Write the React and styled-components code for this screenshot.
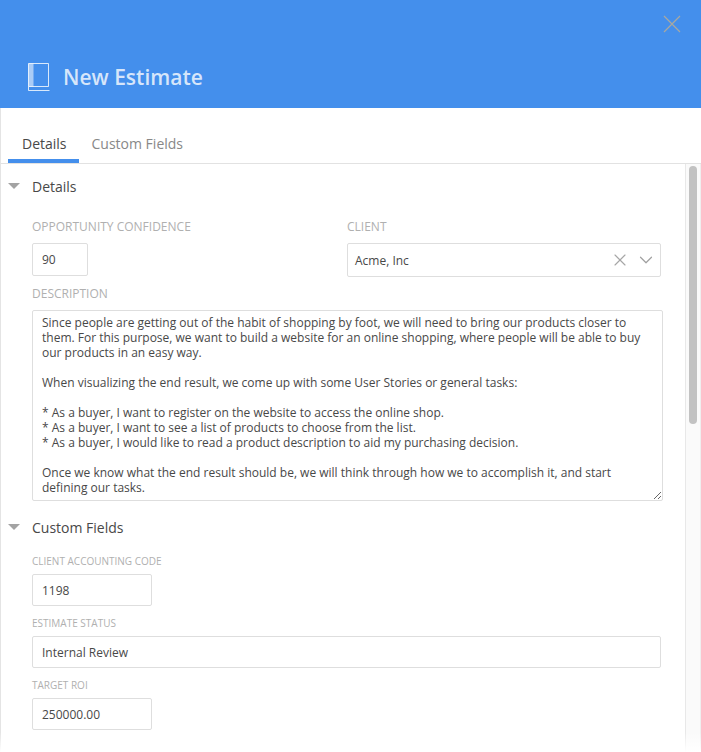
import React from "react";
import styled, { createGlobalStyle } from "styled-components";
import { X, ChevronDown } from "lucide-react";

const GlobalStyle = createGlobalStyle`
  html, body {
    margin: 0;
    padding: 0;
    background: #fff;
    font-family: "Open Sans", "Liberation Sans", sans-serif;
  }
  * { box-sizing: border-box; }
`;

const Modal = styled.div`
  position: relative;
  width: 701px;
  height: 752px;
  overflow: hidden;
  background: #fff;
  display: flex;
  flex-direction: column;
`;

const Header = styled.header`
  height: 108px;
  flex: none;
  background: #448fec;
  padding: 63px 0 0 28px;
  display: flex;
  align-items: flex-start;
  gap: 14px;
`;

const Title = styled.h1`
  margin: 0;
  margin-left: -1px;
  font-size: 21px;
  line-height: 28px;
  font-weight: 600;
  color: rgba(255, 255, 255, 0.78);
`;

const CloseButton = styled.button`
  position: absolute;
  top: 15px;
  right: 20px;
  width: 18px;
  height: 18px;
  padding: 0;
  border: 0;
  background: none;
  display: block;
`;

const Main = styled.div`
  flex: 1;
  min-height: 0;
  display: flex;
  flex-direction: column;
  border-left: 1px solid #e4e4e4;
`;

const Tabs = styled.nav`
  height: 56px;
  flex: none;
  padding: 0 0 0 7px;
  border-bottom: 1px solid #e2e2e2;
  display: flex;
  align-items: flex-end;
  gap: 13px;
`;

const Tab = styled.div`
  height: 51px;
  padding: 22px ${(p) => (p.$active ? "12px 0 14px" : "0 0")};
  font-size: 14px;
  line-height: 19px;
  color: ${(p) => (p.$active ? "#484848" : "#888")};
  border-bottom: 4px solid ${(p) => (p.$active ? "#448fec" : "transparent")};
`;

const Body = styled.div`
  flex: 1;
  min-height: 0;
  display: flex;
  overflow: hidden;
`;

const Content = styled.div`
  flex: 1;
  min-width: 0;
  padding: 0 24px 0 7px;
`;

const Track = styled.div`
  width: 16px;
  flex: none;
  background: #fafafa;
  border-left: 1px solid #e8e8e8;
  border-right: 1px solid #efefef;
  padding: 2px 3px 0;
`;

const Thumb = styled.div`
  width: 8px;
  height: 258px;
  border-radius: 4px;
  background: #c2c2c2;
`;

const BottomFade = styled.div`
  position: absolute;
  left: 0;
  right: 0;
  bottom: 0;
  height: 20px;
  background: linear-gradient(rgba(255, 255, 255, 0), #fff);
  pointer-events: none;
`;

const SectionHead = styled.div`
  display: flex;
  align-items: center;
  height: 20px;
  margin-top: ${(p) => p.$top}px;
  font-size: 14px;
  color: #484848;
  gap: 12px;
`;

const Caret = styled.span`
  width: 0;
  height: 0;
  margin-top: -1px;
  border-left: 6px solid transparent;
  border-right: 6px solid transparent;
  border-top: 6px solid #a3a3a3;
`;

const Section = styled.section`
  padding-left: 24px;
`;

const TopRow = styled.div`
  display: grid;
  grid-template-columns: 315px 314px;
  margin-top: 23px;
`;

const Label = styled.label`
  display: block;
  font-size: ${(p) => (p.$small ? "10px" : "12px")};
  line-height: 16px;
  color: #b0b0b0;
  margin-top: ${(p) => p.$top || 0}px;
`;

const Field = styled.div`
  width: ${(p) => p.$width}px;
  height: ${(p) => p.$height || 32}px;
  margin-top: ${(p) => p.$top}px;
  padding-left: ${(p) => p.$pad || 9}px;
  border: 1px solid #dedede;
  border-radius: 2px;
  background: #fff;
  font-size: 12px;
  color: #484848;
  display: flex;
  align-items: center;
`;

const ClientValue = styled.span`
  flex: 1;
`;

const ClearIcon = styled(X)`
  width: 20px;
  height: 20px;
  color: #a6a6a6;
  margin-right: 5px;
`;

const OpenIcon = styled(ChevronDown)`
  width: 22px;
  height: 22px;
  color: #a0a0a0;
  margin-right: 3px;
`;

const Description = styled.textarea`
  display: block;
  width: 631px;
  height: 191px;
  margin: 8px 0 0;
  padding: 4px 9px;
  border: 1px solid #dedede;
  border-radius: 2px;
  outline: none;
  overflow: hidden;
  resize: both;
  font-family: "Open Sans", "Liberation Sans", sans-serif;
  font-size: 12px;
  line-height: 15px;
  color: #484848;
`;

const BookIcon = () => (
  <svg width="22" height="28" viewBox="0 0 22 28" fill="none" style={{ flex: "none" }}>
    <rect x="0.5" y="0.5" width="5" height="23" fill="#fff" fillOpacity="0.55" />
    <path d="M0.5 0.5H20.5V23.5H0.5Z M0.5 23.5V27.5H21.5" stroke="#fff" strokeOpacity="0.8" />
  </svg>
);

const descriptionText = `Since people are getting out of the habit of shopping by foot, we will need to bring our products closer to them. For this purpose, we want to build a website for an online shopping, where people will be able to buy our products in an easy way.

When visualizing the end result, we come up with some User Stories or general tasks:

* As a buyer, I want to register on the website to access the online shop.
* As a buyer, I want to see a list of products to choose from the list.
* As a buyer, I would like to read a product description to aid my purchasing decision.

Once we know what the end result should be, we will think through how we to accomplish it, and start defining our tasks.`;

export default function App() {
  return (
    <Modal>
      <GlobalStyle />
      <Header>
        <BookIcon />
        <Title>New Estimate</Title>
        <CloseButton aria-label="Close">
          <svg width="18" height="18" viewBox="0 0 18 18" fill="none">
            <path d="M1 1L17 17M17 1L1 17" stroke="#a8a8a0" strokeWidth="1.2" />
          </svg>
        </CloseButton>
      </Header>
      <Main>
        <Tabs>
          <Tab $active>Details</Tab>
          <Tab>Custom Fields</Tab>
        </Tabs>
        <Body>
          <Content>
            <SectionHead $top={12}>
              <Caret />
              Details
            </SectionHead>
            <Section>
              <TopRow>
                <div>
                  <Label>OPPORTUNITY CONFIDENCE</Label>
                  <Field $width={56} $height={33} $top={8}>90</Field>
                </div>
                <div>
                  <Label>CLIENT</Label>
                  <Field $width={314} $height={34} $pad={7} $top={8}>
                    <ClientValue>Acme, Inc</ClientValue>
                    <ClearIcon strokeWidth={1.4} />
                    <OpenIcon strokeWidth={1.3} />
                  </Field>
                </div>
              </TopRow>
              <Label $top={9}>DESCRIPTION</Label>
              <Description readOnly value={descriptionText} />
            </Section>
            <SectionHead $top={16}>
              <Caret />
              Custom Fields
            </SectionHead>
            <Section>
              <Label $small $top={16}>CLIENT ACCOUNTING CODE</Label>
              <Field $width={120} $top={5}>1198</Field>
              <Label $small $top={9}>ESTIMATE STATUS</Label>
              <Field $width={629} $top={5}>Internal Review</Field>
              <Label $small $top={9}>TARGET ROI</Label>
              <Field $width={120} $top={5}>250000.00</Field>
            </Section>
          </Content>
          <Track>
            <Thumb />
          </Track>
        </Body>
      </Main>
      <BottomFade />
    </Modal>
  );
}
